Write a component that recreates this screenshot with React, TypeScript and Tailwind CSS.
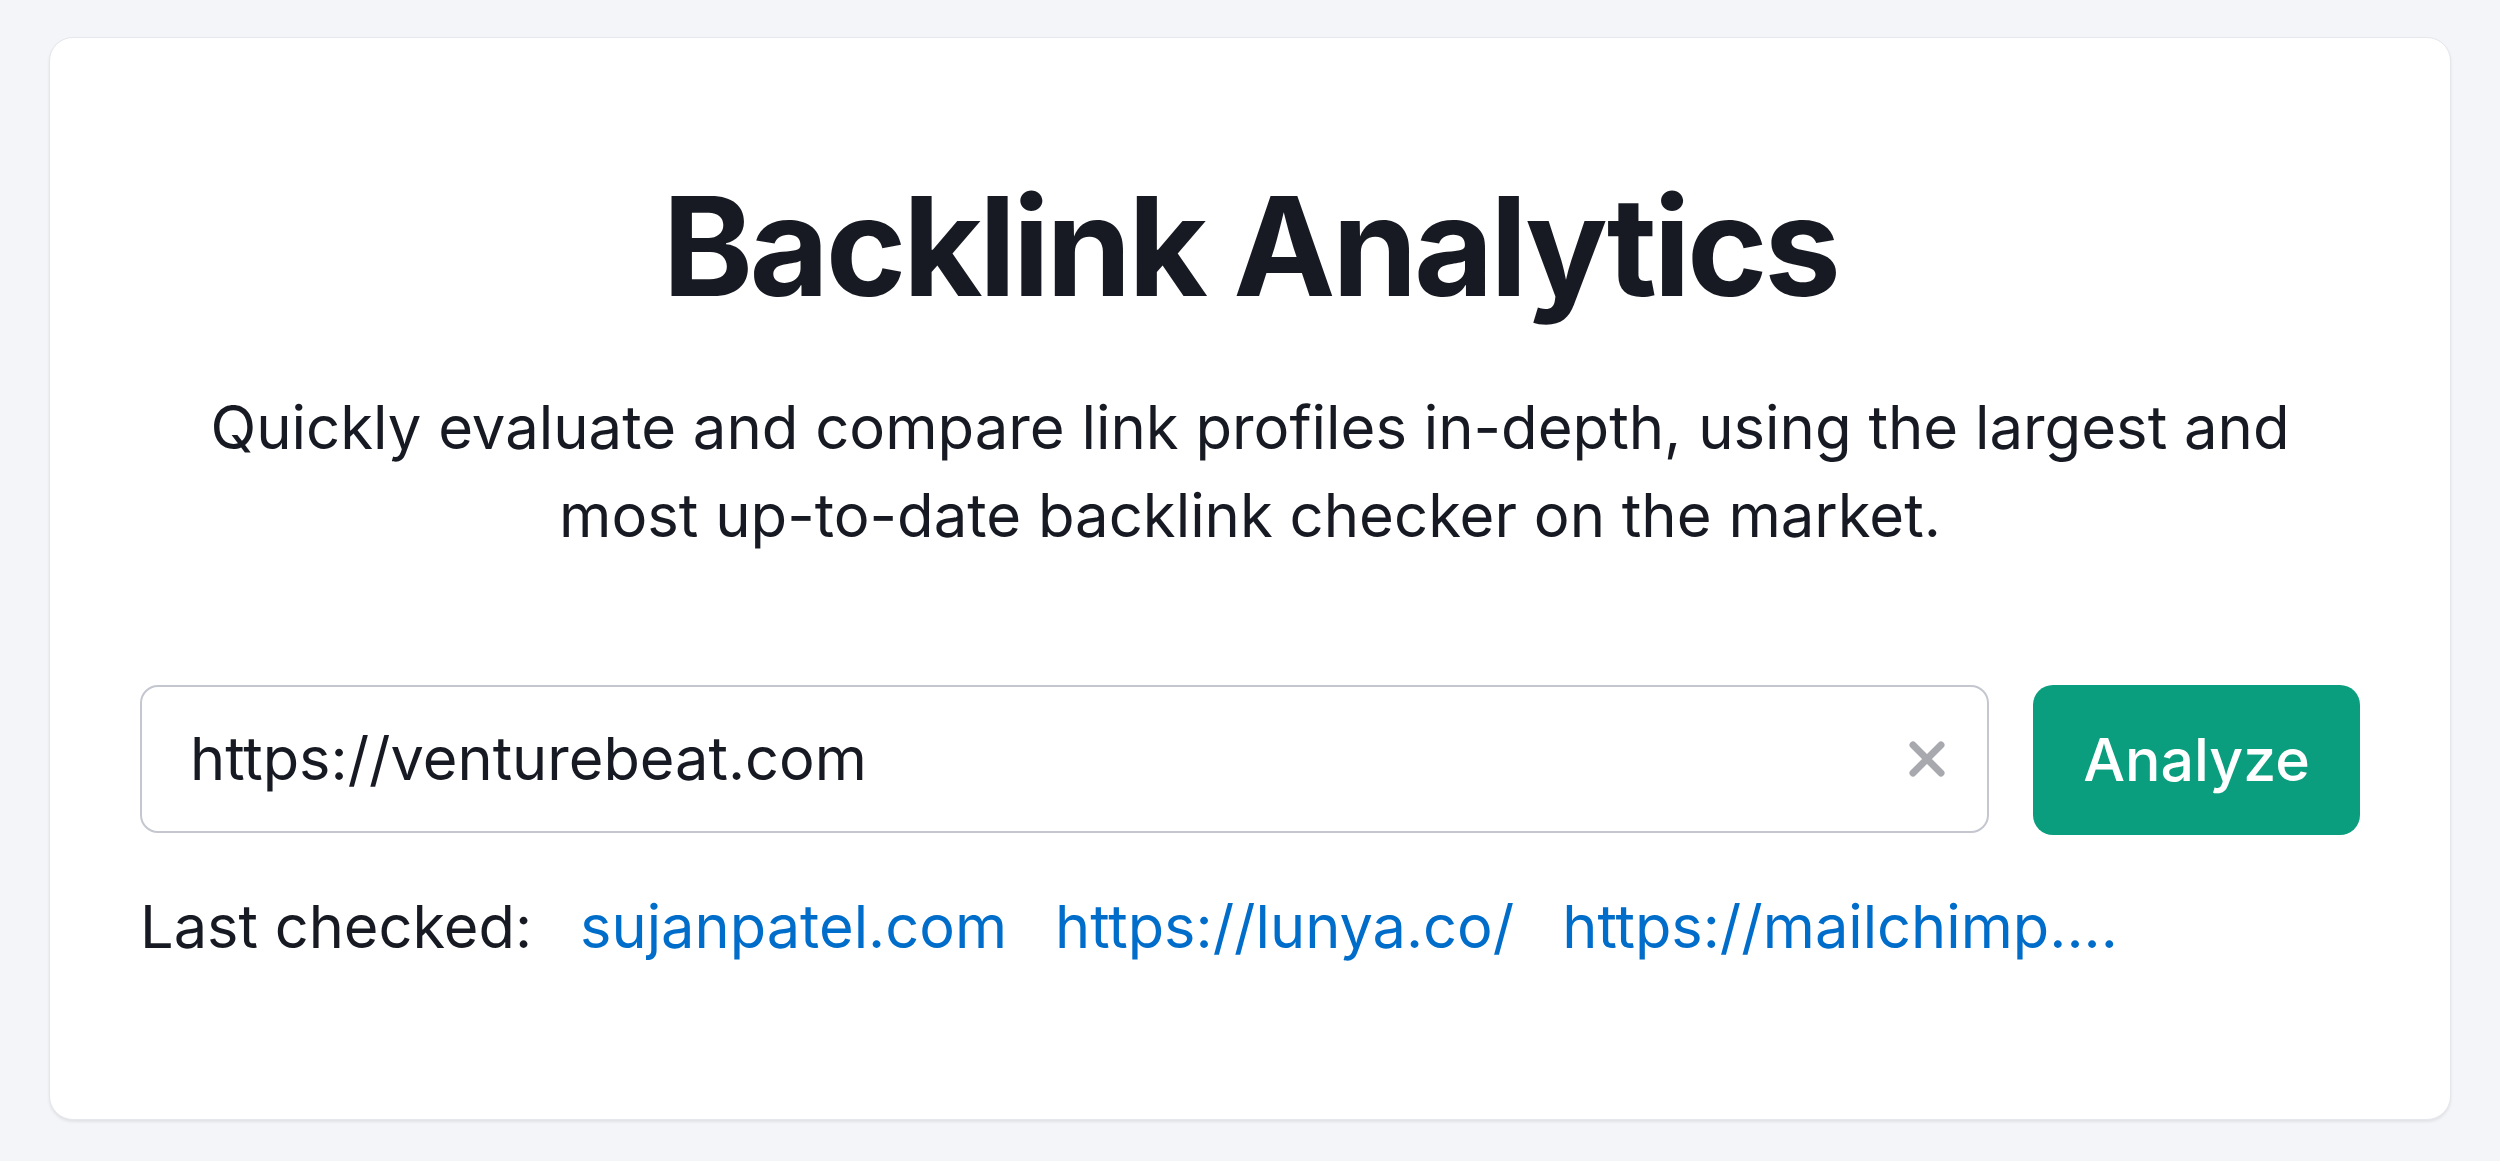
import { useState } from 'react';

const recent = ['sujanpatel.com', 'https://lunya.co/', 'https://mailchimp....'];

export default function App() {
  const [url, setUrl] = useState('https://venturebeat.com');

  return (
    <div
      className="min-h-screen bg-[#f4f5f9] pt-[37px] px-[49px] text-[#171a22]"
      style={{ fontFamily: 'Inter, "Noto Sans", sans-serif' }}
    >
      <div className="h-[1083px] bg-white rounded-[24px] border border-[#e6e7ec] shadow-[0_2px_3px_rgba(0,0,0,0.08)] px-[90px] pt-[140px]">
        {/* Heading */}
        <h1 className="text-center text-[137px] leading-[137px] font-bold tracking-[-0.025em]">
          Backlink Analytics
        </h1>
        <p className="mt-[68px] mx-auto text-center text-[59.8px] leading-[88px] max-w-[2120px]">
          Quickly evaluate and compare link profiles in-depth, using the largest and most
          up-to-date backlink checker on the market.
        </p>

        {/* Search */}
        <div className="mt-[126px] flex gap-[44px]">
          <div className="flex-1 h-[148px] flex items-center rounded-[18px] border-2 border-[#c4c7cf] pl-[48px] pr-[40px]">
            <input
              value={url}
              onChange={(e) => setUrl(e.target.value)}
              className="flex-1 bg-transparent outline-none text-[59.5px] text-[#171a22]"
            />
            <button className="flex items-center justify-center w-[40px] h-[40px]" onClick={() => setUrl('')}>
              <svg viewBox="0 0 38 38" className="w-[38px] h-[38px]">
                <path d="M5 5 L33 33 M33 5 L5 33" stroke="#a8a9af" strokeWidth="7" strokeLinecap="round" />
              </svg>
            </button>
          </div>
          <button className="w-[327px] h-[150px] rounded-[20px] bg-[#0a9e7f] text-white text-[59px] font-medium">
            Analyze
          </button>
        </div>

        {/* Recent checks */}
        <div className="mt-[47px] flex items-baseline gap-[48px] text-[59.5px]">
          <span>Last checked:</span>
          {recent.map((r) => (
            <a key={r} href="#" className="text-[#006dca]">
              {r}
            </a>
          ))}
        </div>
      </div>
    </div>
  );
}
